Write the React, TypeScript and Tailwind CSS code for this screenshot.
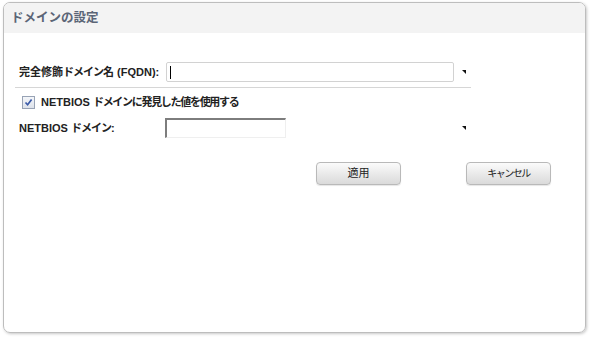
import React from 'react';

const jp = { fontFamily: '"Liberation Sans", "Noto Sans CJK JP", sans-serif' };

function Corner() {
  return (
    <svg width="5" height="5" viewBox="0 0 5 5" className="ml-auto mr-[4px] shrink-0">
      <polygon points="0,0 4,0 4,4" fill="#111" />
    </svg>
  );
}

function Kana({ children }: { children: React.ReactNode }) {
  return <span className="tracking-[-1px]">{children}</span>;
}

export default function App() {
  return (
    <div className="w-[590px] h-[337px] bg-white pt-[2px] pl-[3px]" style={jp}>
      <div className="w-[583px] h-[331px] border border-[#bdbdbd] rounded-[7px] shadow-[1px_1px_3px_rgba(0,0,0,0.22)] overflow-hidden flex flex-col">
        {/* Header */}
        <div className="h-[30px] bg-[#f3f3f3] flex items-center pl-[7px]">
          <h1 className="text-[12.5px] font-bold text-[#5b6577] leading-none">ドメインの設定</h1>
        </div>

        {/* Form */}
        <div className="ml-[11px] w-[456px] mt-[29px] text-[11px] text-[#222]">
          <div className="h-[20px] flex items-center pl-[4px]">
            <label className="w-[147px] font-bold">
              完全修飾<Kana>ドメイン</Kana>名 (FQDN):
            </label>
            <div className="w-[288px] h-[20px] border border-[#d2d2d2] rounded-[2px] bg-white flex items-center pl-[3px]">
              <span className="w-px h-[13px] bg-black" />
            </div>
            <Corner />
          </div>

          <div className="mt-[5px] border-t border-[#d6d6d6]" />

          <div className="mt-[8px] h-[13px] flex items-center pl-[7px] gap-[6px]">
            <span className="w-[13px] h-[13px] border border-[#98a3b5] bg-gradient-to-b from-[#f4f6fa] to-[#dde2ea] flex items-center justify-center">
              <svg width="9" height="9" viewBox="0 0 9 9">
                <path d="M1.5 4.5 L3.6 6.8 L7.6 1.6" stroke="#3a5aa8" strokeWidth="1.7" fill="none" />
              </svg>
            </span>
            <span className="font-bold">
              NETBIOS <span className="tracking-[-1.3px]">ドメインに発見した値を使用する</span>
            </span>
          </div>

          <div className="mt-[9px] h-[20px] flex items-center pl-[4px]">
            <label className="w-[146px] font-bold">
              NETBIOS <Kana>ドメイン</Kana>:
            </label>
            <div className="w-[121px] h-[20px] border-t-2 border-l-2 border-r border-b border-t-[#7d7d7d] border-l-[#7d7d7d] border-r-[#efefef] border-b-[#efefef] bg-white" />
            <Corner />
          </div>
        </div>

        {/* Buttons */}
        <div className="mt-[24px] flex justify-end pr-[34px] gap-[65px]">
          <button className="w-[85px] h-[23px] border border-[#b9b9b9] rounded-[4px] bg-gradient-to-b from-[#fbfbfb] to-[#dadada] text-[11px] text-[#222] shadow-[0_1px_1px_rgba(0,0,0,0.1)]">
            適用
          </button>
          <button className="w-[85px] h-[23px] border border-[#b9b9b9] rounded-[4px] bg-gradient-to-b from-[#fbfbfb] to-[#dadada] text-[10px] tracking-[-1.5px] text-[#222] shadow-[0_1px_1px_rgba(0,0,0,0.1)]">
            キャンセル
          </button>
        </div>
      </div>
    </div>
  );
}
